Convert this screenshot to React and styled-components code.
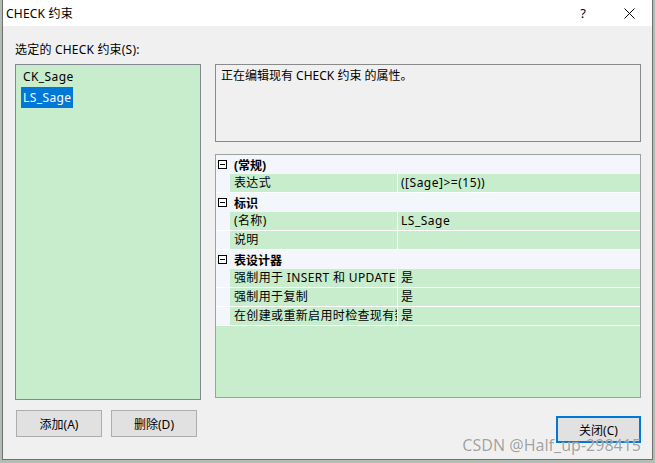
import React from "react";
import styled, { createGlobalStyle } from "styled-components";

const GlobalStyle = createGlobalStyle`
  body {
    margin: 0;
    background: #b3bcb3;
    font-family: "Noto Sans", "Noto Sans CJK SC", sans-serif;
    font-size: 12px;
    color: #000;
  }
`;

const constraints = ["CK_Sage", "LS_Sage"];

const groups = [
  {
    title: "(常规)",
    rows: [{ name: "表达式", value: "([Sage]>=(15))" }],
  },
  {
    title: "标识",
    rows: [
      { name: "(名称)", value: "LS_Sage" },
      { name: "说明", value: "" },
    ],
  },
  {
    title: "表设计器",
    rows: [
      { name: "强制用于 INSERT 和 UPDATE", value: "是" },
      { name: "强制用于复制", value: "是" },
      { name: "在创建或重新启用时检查现有数据", value: "是" },
    ],
  },
];

export default function App() {
  return (
    <>
      <GlobalStyle />
      <Page>
        <Dialog>
          <TitleBar>
            <Title>CHECK 约束</Title>
            <TitleButton>?</TitleButton>
            <TitleButton>
              <svg width="11" height="11" viewBox="0 0 11 11">
                <path d="M0.5 0.5 L10.5 10.5 M10.5 0.5 L0.5 10.5" stroke="#000" strokeWidth="1" />
              </svg>
            </TitleButton>
          </TitleBar>
          <Body>
            <Label>选定的 CHECK 约束(S):</Label>
            <Main>
              <LeftCol>
                <List>
                  {constraints.map((c) => (
                    <ListItem key={c}>
                      <ItemText $selected={c === "LS_Sage"}>{c}</ItemText>
                    </ListItem>
                  ))}
                </List>
                <ButtonRow>
                  <Button>添加(A)</Button>
                  <Button>删除(D)</Button>
                </ButtonRow>
              </LeftCol>
              <RightCol>
                <DescBox>正在编辑现有 CHECK 约束 的属性。</DescBox>
                <PropGrid>
                  {groups.map((g) => (
                    <React.Fragment key={g.title}>
                      <CategoryRow>
                        <Gutter>
                          <svg width="9" height="9" viewBox="0 0 9 9">
                            <rect x="0.5" y="0.5" width="8" height="8" fill="#fff" stroke="#000" />
                            <path d="M2 4.5 H7" stroke="#000" />
                          </svg>
                        </Gutter>
                        <CategoryName>{g.title}</CategoryName>
                      </CategoryRow>
                      {g.rows.map((r) => (
                        <PropRow key={r.name}>
                          <Gutter />
                          <PropName>{r.name}</PropName>
                          <PropValue>{r.value}</PropValue>
                        </PropRow>
                      ))}
                    </React.Fragment>
                  ))}
                  <GridFill />
                </PropGrid>
                <Footer>
                  <CloseButton>关闭(C)</CloseButton>
                </Footer>
              </RightCol>
            </Main>
          </Body>
          <Watermark>CSDN @Half_up-298415</Watermark>
        </Dialog>
      </Page>
    </>
  );
}

const Page = styled.div`
  width: 655px;
  height: 463px;
  box-sizing: border-box;
  padding: 0 2px 3px 2px;
  display: flex;
`;

const Dialog = styled.div`
  position: relative;
  flex: 1;
  display: flex;
  flex-direction: column;
  background: #f0f0f0;
  border: 1px solid #6f6f6f;
  border-top: none;
`;

const TitleBar = styled.div`
  height: 26px;
  background: #fff;
  display: flex;
  align-items: center;
  padding-left: 3px;
`;

const Title = styled.div`
  flex: 1;
  font-size: 12px;
  letter-spacing: 0.2px;
`;

const TitleButton = styled.div`
  width: 46px;
  height: 26px;
  display: flex;
  align-items: center;
  justify-content: center;
  font-size: 13px;
`;

const Body = styled.div`
  flex: 1;
  display: flex;
  flex-direction: column;
  padding: 15px 11px 0 12px;
`;

const Label = styled.div`
  height: 17px;
  line-height: 17px;
  margin-bottom: 6px;
  letter-spacing: 0.2px;
`;

const Main = styled.div`
  display: flex;
  gap: 14px;
`;

const LeftCol = styled.div`
  width: 186px;
  display: flex;
  flex-direction: column;
`;

const RightCol = styled.div`
  flex: 1;
  display: flex;
  flex-direction: column;
`;

const List = styled.div`
  height: 336px;
  box-sizing: border-box;
  border: 1px solid #828790;
  background: #c7edcc;
  padding: 1px 5px;
`;

const ListItem = styled.div`
  height: 21px;
  display: flex;
  align-items: center;
`;

const ItemText = styled.span`
  padding: 0 2px;
  line-height: 21px;
  letter-spacing: 0.4px;
  background: ${(p) => (p.$selected ? "#0078d7" : "transparent")};
  color: ${(p) => (p.$selected ? "#fff" : "#000")};
`;

const ButtonRow = styled.div`
  display: flex;
  gap: 9px;
  margin-top: 10px;
  padding-left: 1px;
`;

const Button = styled.div`
  width: 86px;
  height: 27px;
  box-sizing: border-box;
  border: 1px solid #adadad;
  background: #e1e1e1;
  display: flex;
  align-items: center;
  justify-content: center;
`;

const CloseButton = styled(Button)`
  border: 2px solid #0078d7;
  width: 85px;
`;

const DescBox = styled.div`
  height: 78px;
  box-sizing: border-box;
  border: 1px solid #8a8a8a;
  padding: 2px 5px;
  line-height: 17px;
`;

const PropGrid = styled.div`
  margin-top: 12px;
  height: 244px;
  box-sizing: border-box;
  border: 1px solid #a0a0a0;
  display: flex;
  flex-direction: column;
  background: #c7edcc;
`;

const CategoryRow = styled.div`
  height: 19px;
  display: flex;
  align-items: center;
  background: #f3f6fb;
`;

const Gutter = styled.div`
  width: 14px;
  align-self: stretch;
  display: flex;
  align-items: center;
  padding-left: 2px;
  box-sizing: border-box;
  background: #f3f6fb;
`;

const CategoryName = styled.div`
  font-weight: bold;
  padding-left: 4px;
`;

const PropRow = styled.div`
  height: 19px;
  display: flex;
  border-bottom: 1px solid #fff;
  box-sizing: border-box;
  line-height: 18px;
`;

const PropName = styled.div`
  width: 167px;
  padding-left: 4px;
  box-sizing: border-box;
  white-space: nowrap;
  overflow: hidden;
  letter-spacing: 0.35px;
  background: #c7edcc;
`;

const PropValue = styled.div`
  flex: 1;
  border-left: 1px solid #fff;
  padding-left: 3px;
  letter-spacing: 0.5px;
  background: #c7edcc;
`;

const GridFill = styled.div`
  flex: 1;
`;

const Footer = styled.div`
  display: flex;
  justify-content: flex-end;
  margin-top: 18px;
`;

const Watermark = styled.div`
  position: absolute;
  right: 11px;
  bottom: 3px;
  font-size: 16px;
  color: rgba(120, 120, 120, 0.7);
  text-shadow: 0 0 1px #fff;
  pointer-events: none;
`;
